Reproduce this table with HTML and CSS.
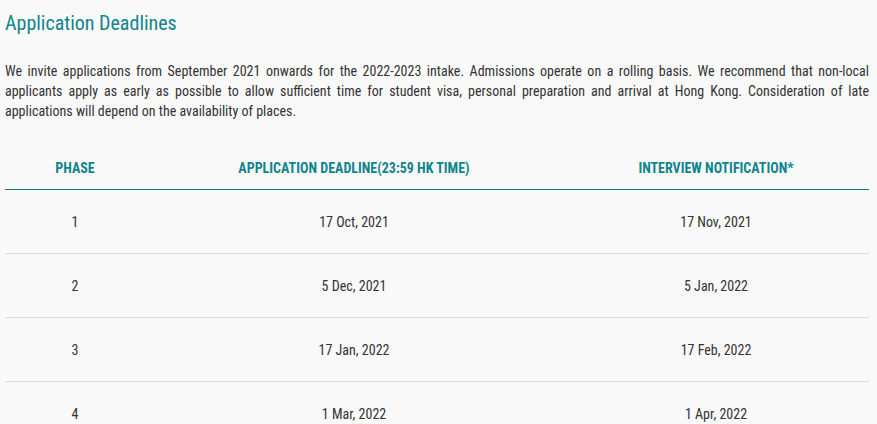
FILE: index.html
```html
<!DOCTYPE html>
<html lang="en">
<head>
<meta charset="utf-8">
<title>Application Deadlines</title>
<link rel="stylesheet" href="styles.css">
</head>
<body>
<section class="deadlines">
  <h2 class="title">Application Deadlines</h2>
  <p class="intro">We invite applications from September 2021 onwards for the 2022-2023 intake. Admissions operate on a rolling basis. We recommend that non-local applicants apply as early as possible to allow sufficient time for student visa, personal preparation and arrival at Hong Kong. Consideration of late applications will depend on the availability of places.</p>
  <div class="table">
    <div class="row head">
      <div class="cell">PHASE</div>
      <div class="cell">APPLICATION DEADLINE(23:59 HK TIME)</div>
      <div class="cell">INTERVIEW NOTIFICATION*</div>
    </div>
    <div class="row">
      <div class="cell">1</div>
      <div class="cell">17 Oct, 2021</div>
      <div class="cell">17 Nov, 2021</div>
    </div>
    <div class="row">
      <div class="cell">2</div>
      <div class="cell">5 Dec, 2021</div>
      <div class="cell">5 Jan, 2022</div>
    </div>
    <div class="row">
      <div class="cell">3</div>
      <div class="cell">17 Jan, 2022</div>
      <div class="cell">17 Feb, 2022</div>
    </div>
    <div class="row">
      <div class="cell">4</div>
      <div class="cell">1 Mar, 2022</div>
      <div class="cell">1 Apr, 2022</div>
    </div>
  </div>
</section>
</body>
</html>
```
FILE: styles.css
```css
html, body {
  margin: 0;
  padding: 0;
  background: #f9f9f9;
}
body {
  font-family: "Roboto Condensed", Roboto, "Liberation Sans", sans-serif;
  font-stretch: condensed;
  color: #333;
}
.deadlines {
  padding: 0 8px 0 5px;
}
.title {
  margin: 0;
  padding-top: 10px;
  font-size: 20px;
  line-height: 26px;
  font-weight: 400;
  color: #0f858b;
}
.intro {
  margin: 25px 0 0 0;
  font-size: 14px;
  line-height: 20px;
  text-align: justify;
  color: #333;
}
.table {
  margin-top: 37px;
}
.row {
  display: grid;
  grid-template-columns: 140px 418px 1fr;
  height: 63px;
  align-items: center;
  border-bottom: 1px solid #dcdcdc;
  font-size: 14px;
  line-height: 20px;
}
.row.head {
  height: 31px;
  align-items: start;
  border-bottom: 1px solid #137a80;
  font-weight: 700;
  color: #0f858b;
}
.cell {
  text-align: center;
}
```
